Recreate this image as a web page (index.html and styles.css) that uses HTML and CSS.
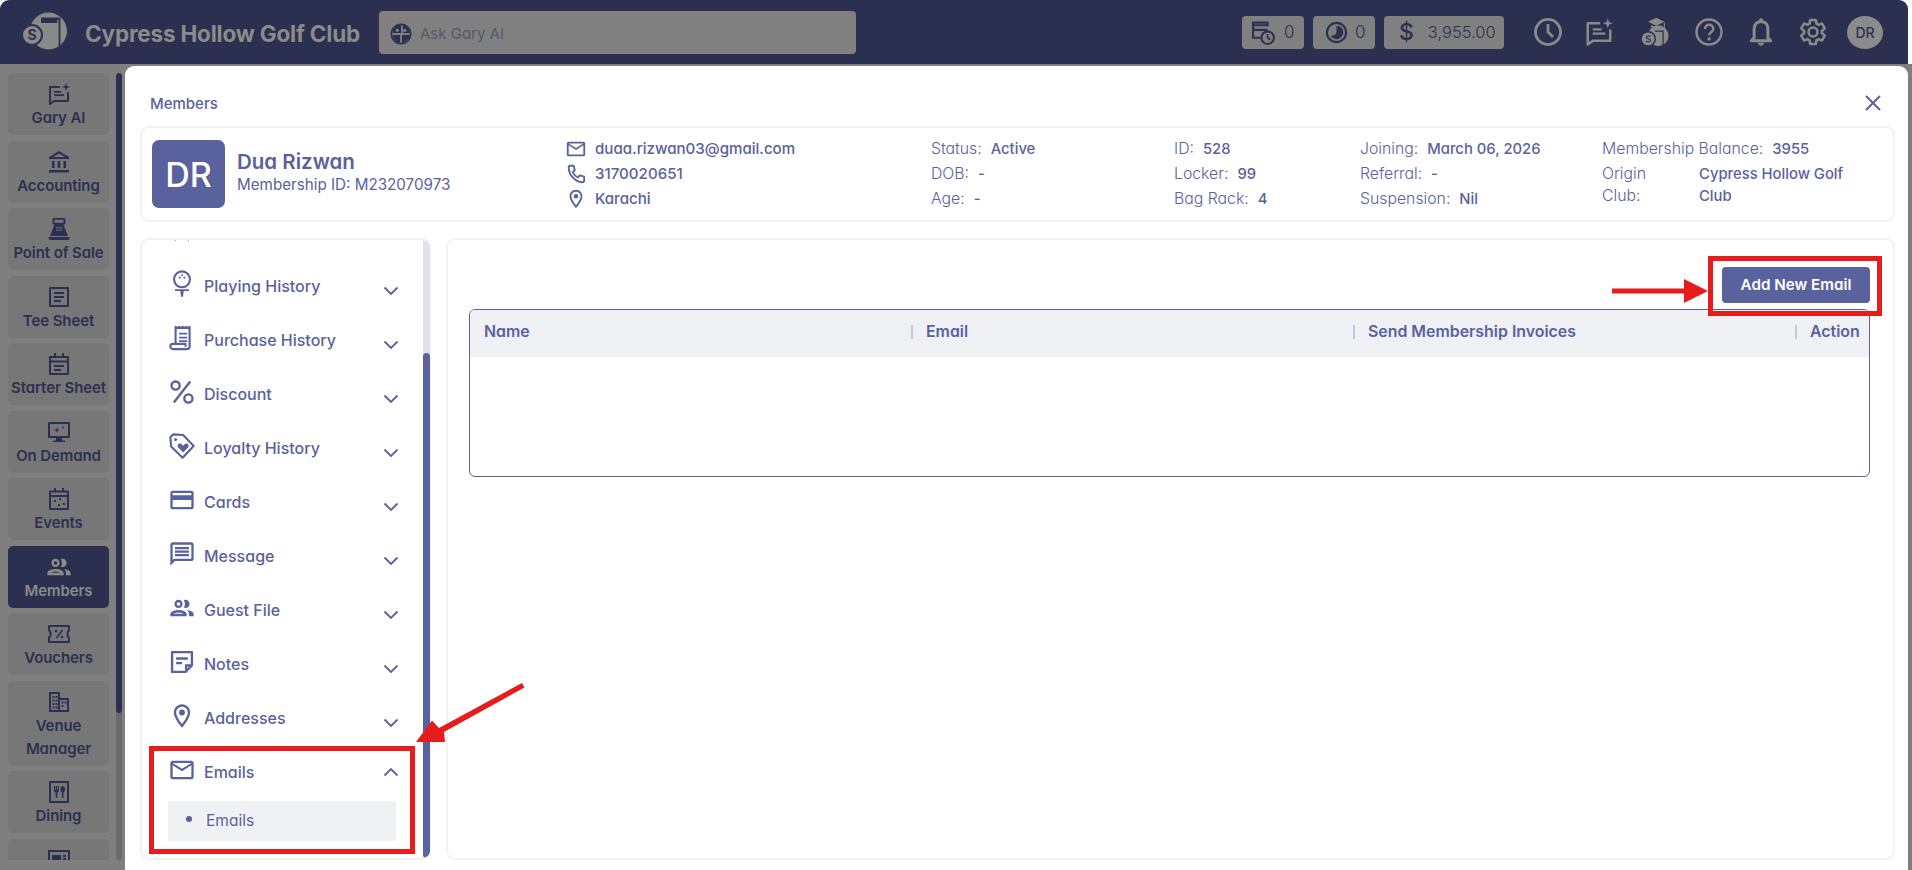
FILE: index.html
```html
<!DOCTYPE html>
<html lang="en">
<head>
<meta charset="utf-8">
<title>Members</title>
<link rel="stylesheet" href="styles.css">
</head>
<body>
<svg class="sprite" aria-hidden="true">
  <symbol id="i-mail" viewBox="0 0 24 24"><path d="M20 4H4c-1.1 0-2 .9-2 2v12c0 1.1.9 2 2 2h16c1.1 0 2-.9 2-2V6c0-1.1-.9-2-2-2zm0 14H4V8l8 5 8-5v10zm-8-7L4 6h16l-8 5z"/></symbol>
  <symbol id="i-pin" viewBox="0 0 24 24"><path d="M12 2C8.13 2 5 5.13 5 9c0 5.25 7 13 7 13s7-7.75 7-13c0-3.87-3.13-7-7-7zM7 9c0-2.76 2.24-5 5-5s5 2.24 5 5c0 2.88-2.88 7.19-5 9.88C9.92 16.21 7 11.85 7 9z"/><circle cx="12" cy="9" r="2.5"/></symbol>
  <symbol id="i-phone" viewBox="0 0 24 24"><path fill="none" stroke="currentColor" stroke-width="2" stroke-linejoin="round" d="M6 3h3.5l1.2 5-2.2 1.8c1 2.6 3 4.8 5.6 6l1.9-2.2 4.9 1.3V19c0 1-.8 2-2 2C11 20.500 4.500 13.500 4 5c0-1 .9-2 2-2z"/></symbol>
  <symbol id="i-card" viewBox="0 0 24 24"><path d="M20 4H4c-1.110 0-1.990.89-1.990 2L2 18c0 1.110.89 2 2 2h16c1.110 0 2-.89 2-2V6c0-1.110-.89-2-2-2zm0 14H4v-6h16v6zm0-10H4V6h16v2z"/></symbol>
  <symbol id="i-msg" viewBox="0 0 24 24"><path d="M20 2H4c-1.100 0-1.990.9-1.990 2L2 22l4-4h14c1.100 0 2-.9 2-2V4c0-1.100-.9-2-2-2zm0 14H5.170L4 17.170V4h16v12zM6 12h12v2H6zm0-3h12v2H6zm0-3h12v2H6z"/></symbol>
  <symbol id="i-people" viewBox="0 0 24 24"><path d="M9 13.750c-2.340 0-7 1.170-7 3.500V19h14v-1.750c0-2.330-4.660-3.500-7-3.500zM4.340 17c.84-.58 2.870-1.250 4.660-1.250s3.820.67 4.660 1.250H4.340zM9 12c1.930 0 3.500-1.570 3.500-3.500S10.930 5 9 5 5.500 6.570 5.500 8.500 7.070 12 9 12zm0-5c.83 0 1.500.67 1.500 1.500S9.830 10 9 10s-1.500-.67-1.500-1.500S8.170 7 9 7zm7.040 6.810c1.160.84 1.960 1.960 1.960 3.440V19h4v-1.750c0-2.020-3.500-3.170-5.960-3.440zM15 12c1.930 0 3.500-1.570 3.500-3.500S16.930 5 15 5c-.54 0-1.040.13-1.500.35.63.89 1 1.980 1 3.150s-.37 2.260-1 3.150c.46.22.96.35 1.500.35z"/></symbol>
  <symbol id="i-note" viewBox="0 0 24 24"><path fill="none" stroke="currentColor" stroke-width="2" stroke-linejoin="round" d="M3.500 3.500h17V15L15 20.500H3.500z"/><path d="M7 8h10v2H7zm0 4h5v2H7zm7.500 7v-5h6v2h-4v3z"/></symbol>
  <symbol id="i-percent" viewBox="0 0 24 24"><path fill="none" stroke="currentColor" stroke-width="2" d="M19 3 5 21"/><circle cx="6.500" cy="6.500" r="3.500" fill="none" stroke="currentColor" stroke-width="2"/><circle cx="17.500" cy="17.500" r="3.500" fill="none" stroke="currentColor" stroke-width="2"/></symbol>
  <symbol id="i-tag" viewBox="0 0 24 24"><path fill="none" stroke="currentColor" stroke-width="1.800" stroke-linejoin="round" d="M2 4.500 4.500 2l8.500.6 9 9.400-9.500 10L2.700 12.500z"/><circle cx="6.500" cy="6.500" r="1.300"/><path d="M13 17.500 8.800 13.300c-1.900-2.300 1.500-5 3.200-2.500l1 1 1-1c1.700-2.500 5.100.2 3.200 2.500z"/></symbol>
  <symbol id="i-golf" viewBox="0 0 24 24"><circle cx="12" cy="8" r="6.800" fill="none" stroke="currentColor" stroke-width="1.800"/><circle cx="10" cy="6.500" r=".9"/><circle cx="14" cy="6.500" r=".9"/><circle cx="12" cy="4.500" r=".9"/><path d="M6 16.500h12V18h-4.500l-.7 5h-1.600l-.7-5H6z"/></symbol>
  <symbol id="i-receipt" viewBox="0 0 24 24"><path fill="none" stroke="currentColor" stroke-width="1.800" stroke-linejoin="round" d="M6.500 17V2.500l1.500 1 1.500-1 1.500 1 1.500-1 1.500 1 1.500-1 1.500 1 1.500-1V19c0 1.500-1 2.500-2.500 2.500H4.500C3 21.500 2 20.500 2 19s1-2 2.500-2H15v2.500"/><path d="M9.500 7.500h7V9h-7zm0 3.500h7v1.500h-7zm0 3h7v1.500h-7z"/></symbol>
  <symbol id="i-bookmark" viewBox="0 0 24 24"><path fill="none" stroke="currentColor" stroke-width="2" d="M7 2v19l5-4 5 4V2z"/></symbol>
  <symbol id="i-chat" viewBox="0 0 24 24"><path fill="none" stroke="currentColor" stroke-width="2" stroke-linejoin="round" d="M13 5H3v17l4-3h14v-9"/><path d="M7 9h7v1.800H7zm0 3.300h10v1.800H7z"/><path d="M19 1l1 3 3 1-3 1-1 3-1-3-3-1 3-1z"/></symbol>
  <symbol id="i-bank" viewBox="0 0 24 24"><path d="M12 1 2 7v2h20V7zm0 2.500L18 7H6zM5 11h2.500v7H5zm5.700 0h2.600v7h-2.600zm5.800 0H19v7h-2.500zM2 20h20v2.500H2z"/></symbol>
  <symbol id="i-pos" viewBox="0 0 24 24"><path d="M7 1h10c1 0 1.500.6 1.500 1.500V6c0 1-.6 1.500-1.500 1.500h-.5L21 19H3L7.500 7.500H7C6 7.500 5.500 7 5.500 6V2.500C5.500 1.600 6 1 7 1zm.5 1.800v2.900h9V2.800zM1.500 20h21v1c0 1-1 2-2 2h-17c-1 0-2-1-2-2z"/><path fill="#777" d="M9 10h1.500v1.300H9zm2.300 0h1.500v1.300h-1.500zm2.300 0h1.500v1.300h-1.500zM9 12.500h1.500v1.300H9zm2.300 0h1.500v1.300h-1.500zm2.300 0h1.500v1.300h-1.500z"/></symbol>
  <symbol id="i-sheet" viewBox="0 0 24 24"><path fill="none" stroke="currentColor" stroke-width="2" stroke-linejoin="round" d="M3 3h18v18H3z"/><path d="M7 7h10v2H7zm0 4h10v2H7zm0 4h7v2H7z"/></symbol>
  <symbol id="i-starter" viewBox="0 0 24 24"><path fill="none" stroke="currentColor" stroke-width="2" stroke-linejoin="round" d="M3 5h18v17H3z"/><path d="M7 1h2v4H7zm8 0h2v4h-2zM3 8.500h18v2H3zM7 13h10v2H7zm0 4h7v2H7z"/></symbol>
  <symbol id="i-monitor" viewBox="0 0 24 24"><path fill="none" stroke="currentColor" stroke-width="2" stroke-linejoin="round" d="M2 3h20v14H2z"/><path d="M9 18h6v2.500h3V22H6v-1.500h3zM10 7l.7 2.300L13 10l-2.300.7L10 13l-.7-2.300L7 10l2.300-.7zm6-1 .4 1.100 1.100.4-1.100.4L16 9l-.4-1.100-1.100-.4 1.100-.4z"/></symbol>
  <symbol id="i-cal" viewBox="0 0 24 24"><path fill="none" stroke="currentColor" stroke-width="2" stroke-linejoin="round" d="M3 4.500h18V22H3z"/><path d="M7 1h2v4H7zm8 0h2v4h-2zM3 8h18v2H3zM7 13h2v2H7zm5 0h2v-2h-2zm4 3h2v2h-2zm-5 1h2v2h-2z"/></symbol>
  <symbol id="i-voucher" viewBox="0 0 24 24"><path fill="none" stroke="currentColor" stroke-width="2" stroke-linejoin="round" d="M2 4h20v4.500c-2 .5-2 6.500 0 7V20H2v-4.500c2-.5 2-6.500 0-7z"/><path fill="none" stroke="currentColor" stroke-width="1.500" d="m15.500 8-6 8"/><circle cx="9" cy="9" r="1.300"/><circle cx="15" cy="15" r="1.300"/></symbol>
  <symbol id="i-venue" viewBox="0 0 24 24"><path fill-rule="evenodd" d="M2 2h11v6h9v14H2zm2 2v16h7V4zm9 6v10h7V10z"/><path d="M5.500 6h2v2h-2zm3 0h2v2h-2zm-3 3.500h2v2h-2zm3 0h2v2h-2zm-3 3.500h2v2h-2zm3 0h2v2h-2zm-3 3.500h2v2h-2zm3 0h2v2h-2zm6-5h2v2h-2zm0 3.500h2v2h-2zm3-3.500h2v2h-2z"/></symbol>
  <symbol id="i-dining" viewBox="0 0 24 24"><path fill="none" stroke="currentColor" stroke-width="2" stroke-linejoin="round" d="M3 2h18v20H3z"/><path d="M7 6h1.200v3.500H9V6h1.200v3.500H11V6h1v5c0 1-1 1.500-1.700 1.700V18H8.700v-5.300C8 12.500 7 12 7 11zm8.800 0c1.600 0 2.200 1.500 2.200 3.200 0 1.500-.7 3-1.500 3.200V18h-1.600v-5.600c-.8-.3-1.400-1.700-1.400-3.200C13.500 7.500 14.200 6 15.800 6z"/></symbol>
  <symbol id="i-media" viewBox="0 0 24 24"><path fill="none" stroke="currentColor" stroke-width="2" d="M2 3h20v18H2z"/><path d="M5 7h9v5H5zm11 0h3v2h-3zm0 3h3v2h-3z"/></symbol>
  <symbol id="i-clock" viewBox="0 0 24 24"><circle cx="12" cy="12" r="10" fill="none" stroke="currentColor" stroke-width="2.200"/><path fill="none" stroke="currentColor" stroke-width="2.200" d="M12 5.500V12l4 4"/></symbol>
  <symbol id="i-help" viewBox="0 0 24 24"><circle cx="12" cy="12" r="10" fill="none" stroke="currentColor" stroke-width="2"/><path fill="none" stroke="currentColor" stroke-width="2" d="M8.800 9.500c0-4.300 6.600-4.300 6.600 0 0 2.600-3.300 2.700-3.300 5"/><circle cx="12.100" cy="17.500" r="1.300"/></symbol>
  <symbol id="i-bell" viewBox="0 0 24 24"><path fill="none" stroke="currentColor" stroke-width="2.400" stroke-linejoin="round" d="M12 3.500c3.500 0 5.500 2.500 5.500 6v7l2.200 2.500H4.300l2.200-2.500v-7c0-3.500 2-6 5.500-6z"/><circle cx="12" cy="2.500" r="1.600"/><path d="M9.500 20.500h5c0 3-5 3-5 0z"/></symbol>
  <symbol id="i-gear" viewBox="0 0 24 24"><path fill="none" stroke="currentColor" stroke-width="2" d="M19.140 12.940c.04-.3.06-.61.06-.94 0-.32-.02-.64-.07-.94l2.030-1.580c.18-.14.23-.41.12-.61l-1.920-3.320c-.12-.22-.37-.29-.59-.22l-2.390.96c-.5-.38-1.030-.7-1.620-.94l-.36-2.540c-.04-.24-.24-.41-.48-.41h-3.840c-.24 0-.43.17-.47.41l-.36 2.540c-.59.24-1.130.57-1.620.94l-2.390-.96c-.22-.08-.47 0-.59.22L2.740 8.870c-.12.21-.08.47.12.61l2.030 1.580c-.05.3-.09.63-.09.94s.02.64.07.94l-2.030 1.580c-.18.14-.23.41-.12.61l1.920 3.320c.12.22.37.29.59.22l2.390-.96c.5.38 1.030.7 1.620.94l.36 2.540c.05.24.24.41.48.41h3.840c.24 0 .44-.17.47-.41l.36-2.540c.59-.24 1.130-.56 1.620-.94l2.390.96c.22.08.47 0 .59-.22l1.920-3.320c.12-.22.07-.47-.12-.61l-2.010-1.580zM12 15.600c-1.980 0-3.600-1.620-3.600-3.600s1.620-3.600 3.600-3.600 3.600 1.620 3.600 3.600-1.620 3.600-3.600 3.600z"/></symbol>
  <symbol id="i-grad" viewBox="0 0 24 24"><path d="M13 .5l6.500 3.200L13 7 6.500 3.700zM8.800 6.300 13 8.300l4.200-2v1.500c-1 2-7.400 2-8.400 0zM19 4.500h.9V9H19z"/><circle cx="14.500" cy="15" r="8.300"/><circle cx="6.500" cy="17.500" r="5.700" stroke="#2c3050" stroke-width="1.200"/><path fill="none" stroke="#2c3050" stroke-width="1" d="M12 11.200h6.500V23"/><path fill="none" stroke="#2c3050" stroke-width="1" d="M8.400 15.600c-.8-.8-3.400-.8-3.400.8s3.400.6 3.400 2.200-2.800 1.500-3.600.7"/></symbol>
  <symbol id="i-queue" viewBox="0 0 24 24"><path fill="none" stroke="currentColor" stroke-width="2" d="M2 2.500h14V5H2zM2 5v12h7M2 9.500h14"/><circle cx="16" cy="17" r="6" fill="none" stroke="currentColor" stroke-width="2"/><path fill="none" stroke="currentColor" stroke-width="1.700" d="M16 13.500V17l2.500 2"/></symbol>
  <symbol id="i-half" viewBox="0 0 24 24"><circle cx="12" cy="12" r="10" fill="none" stroke="currentColor" stroke-width="2.200"/><path d="M12 5c5 0 7.500 3.500 7 7.500-.5 3.500-3.500 6.500-7 6.500-2.500 0-5-1.500-6-3.500 2-.2 6-1 6-4z"/></symbol>
  <symbol id="i-gary" viewBox="0 0 24 24"><circle cx="12" cy="12" r="10.500" fill="none" stroke="currentColor" stroke-width="2"/><path d="M12 2v9H3c0-5 4-9 9-9zm2 0c4 1 7 4 7.500 9H14zM3 13h8v8.500C7 21 3.500 17.500 3 13zm10 0h8.500c-.5 4-4 7.500-8.500 8.500z"/><circle cx="8" cy="8" r="1.800" fill="#808080"/><circle cx="16" cy="8" r="1.800" fill="#808080"/></symbol>
</svg>

<div class="app">
  <header class="topbar">
    <svg class="logo" viewBox="0 0 46 42" aria-hidden="true">
      <circle cx="26.500" cy="20" r="18.500" fill="#8a8a8a"/>
      <path d="M19 7.500h18.500V38" fill="none" stroke="#2c3050" stroke-width="1.800"/>
      <path d="M19 7.500h16.500V12H19z" fill="#2c3050"/>
      <circle cx="10" cy="24" r="11" fill="#2c3050"/>
      <circle cx="10" cy="24" r="9" fill="#8a8a8a"/>
      <text x="10" y="29" class="logo-mark">S</text>
    </svg>
    <span class="brand">Cypress Hollow Golf Club</span>
    <label class="search">
      <svg class="search-icon" aria-hidden="true"><use href="#i-gary"/></svg>
      <span>Ask Gary AI</span>
    </label>
    <div class="stats">
      <div class="pill pill-count"><svg class="pill-icon" aria-hidden="true"><use href="#i-queue"/></svg><span>0</span></div>
      <div class="pill pill-count pill-second"><svg class="pill-icon" aria-hidden="true"><use href="#i-half"/></svg><span>0</span></div>
      <div class="pill pill-money"><span class="dollar">$</span><span>3,955.00</span></div>
    </div>
    <div class="actions">
      <svg class="act" aria-hidden="true"><use href="#i-clock"/></svg>
      <svg class="act act-chat" aria-hidden="true"><use href="#i-chat"/></svg>
      <svg class="act act-grad" aria-hidden="true"><use href="#i-grad"/></svg>
      <svg class="act act-help" aria-hidden="true"><use href="#i-help"/></svg>
      <svg class="act act-bell" aria-hidden="true"><use href="#i-bell"/></svg>
      <svg class="act act-gear" aria-hidden="true"><use href="#i-gear"/></svg>
      <span class="user">DR</span>
    </div>
  </header>

  <div class="workspace">
    <aside class="rail">
      <nav class="rail-list">
        <a class="rail-item"><svg aria-hidden="true"><use href="#i-chat"/></svg><span>Gary AI</span></a>
        <a class="rail-item"><svg aria-hidden="true"><use href="#i-bank"/></svg><span>Accounting</span></a>
        <a class="rail-item"><svg aria-hidden="true"><use href="#i-pos"/></svg><span>Point of Sale</span></a>
        <a class="rail-item"><svg aria-hidden="true"><use href="#i-sheet"/></svg><span>Tee Sheet</span></a>
        <a class="rail-item"><svg aria-hidden="true"><use href="#i-starter"/></svg><span>Starter Sheet</span></a>
        <a class="rail-item"><svg aria-hidden="true"><use href="#i-monitor"/></svg><span>On Demand</span></a>
        <a class="rail-item"><svg aria-hidden="true"><use href="#i-cal"/></svg><span>Events</span></a>
        <a class="rail-item is-active rail-wide"><svg aria-hidden="true"><use href="#i-people"/></svg><span>Members</span></a>
        <a class="rail-item"><svg aria-hidden="true"><use href="#i-voucher"/></svg><span>Vouchers</span></a>
        <a class="rail-item rail-tall"><svg aria-hidden="true"><use href="#i-venue"/></svg><span>Venue Manager</span></a>
        <a class="rail-item"><svg aria-hidden="true"><use href="#i-dining"/></svg><span>Dining</span></a>
        <a class="rail-item"><svg aria-hidden="true"><use href="#i-media"/></svg></a>
      </nav>
      <div class="rail-scroll"><div class="rail-thumb"></div></div>
    </aside>

    <main class="modal">
      <div class="modal-head">
        <h1>Members</h1>
        <svg class="close" viewBox="0 0 16 16" aria-hidden="true"><path d="M1 1l14 14M15 1 1 15"/></svg>
      </div>

      <section class="profile">
        <div class="who">
          <div class="avatar">DR</div>
          <div>
            <div class="name">Dua Rizwan</div>
            <div class="memberid">Membership ID: <b>M232070973</b></div>
          </div>
        </div>
        <div class="col col-contact">
          <div class="line"><svg aria-hidden="true"><use href="#i-mail"/></svg><b>duaa.rizwan03@gmail.com</b></div>
          <div class="line"><svg aria-hidden="true"><use href="#i-phone"/></svg><b>3170020651</b></div>
          <div class="line"><svg aria-hidden="true"><use href="#i-pin"/></svg><b>Karachi</b></div>
        </div>
        <div class="col">
          <div class="line">Status: <b>Active</b></div>
          <div class="line">DOB: <b>-</b></div>
          <div class="line">Age: <b>-</b></div>
        </div>
        <div class="col">
          <div class="line">ID: <b>528</b></div>
          <div class="line">Locker: <b>99</b></div>
          <div class="line">Bag Rack: <b>4</b></div>
        </div>
        <div class="col">
          <div class="line">Joining: <b>March 06, 2026</b></div>
          <div class="line">Referral: <b>-</b></div>
          <div class="line">Suspension: <b>Nil</b></div>
        </div>
        <div class="col">
          <div class="line">Membership Balance: <b>3955</b></div>
          <div class="origin"><span>Origin Club:</span><b>Cypress Hollow Golf Club</b></div>
        </div>
      </section>

      <div class="panels">
        <section class="menu-panel">
          <div class="menu">
            <div class="row row-clipped"><svg class="row-icon" aria-hidden="true"><use href="#i-bookmark"/></svg><span class="row-label">Membership</span><svg class="chev" viewBox="0 0 16 10" aria-hidden="true"><path d="M1.500 1.500 8 8l6.500-6.500"/></svg></div>
            <div class="row"><svg class="row-icon" aria-hidden="true"><use href="#i-golf"/></svg><span class="row-label">Playing History</span><svg class="chev" viewBox="0 0 16 10" aria-hidden="true"><path d="M1.500 1.500 8 8l6.500-6.500"/></svg></div>
            <div class="row"><svg class="row-icon" aria-hidden="true"><use href="#i-receipt"/></svg><span class="row-label">Purchase History</span><svg class="chev" viewBox="0 0 16 10" aria-hidden="true"><path d="M1.500 1.500 8 8l6.500-6.500"/></svg></div>
            <div class="row"><svg class="row-icon" aria-hidden="true"><use href="#i-percent"/></svg><span class="row-label">Discount</span><svg class="chev" viewBox="0 0 16 10" aria-hidden="true"><path d="M1.500 1.500 8 8l6.500-6.500"/></svg></div>
            <div class="row"><svg class="row-icon" aria-hidden="true"><use href="#i-tag"/></svg><span class="row-label">Loyalty History</span><svg class="chev" viewBox="0 0 16 10" aria-hidden="true"><path d="M1.500 1.500 8 8l6.500-6.500"/></svg></div>
            <div class="row"><svg class="row-icon" aria-hidden="true"><use href="#i-card"/></svg><span class="row-label">Cards</span><svg class="chev" viewBox="0 0 16 10" aria-hidden="true"><path d="M1.500 1.500 8 8l6.500-6.500"/></svg></div>
            <div class="row"><svg class="row-icon" aria-hidden="true"><use href="#i-msg"/></svg><span class="row-label">Message</span><svg class="chev" viewBox="0 0 16 10" aria-hidden="true"><path d="M1.500 1.500 8 8l6.500-6.500"/></svg></div>
            <div class="row"><svg class="row-icon" aria-hidden="true"><use href="#i-people"/></svg><span class="row-label">Guest File</span><svg class="chev" viewBox="0 0 16 10" aria-hidden="true"><path d="M1.500 1.500 8 8l6.500-6.500"/></svg></div>
            <div class="row"><svg class="row-icon" aria-hidden="true"><use href="#i-note"/></svg><span class="row-label">Notes</span><svg class="chev" viewBox="0 0 16 10" aria-hidden="true"><path d="M1.500 1.500 8 8l6.500-6.500"/></svg></div>
            <div class="row"><svg class="row-icon" aria-hidden="true"><use href="#i-pin"/></svg><span class="row-label">Addresses</span><svg class="chev" viewBox="0 0 16 10" aria-hidden="true"><path d="M1.500 1.500 8 8l6.500-6.500"/></svg></div>
            <div class="row row-open"><svg class="row-icon" aria-hidden="true"><use href="#i-mail"/></svg><span class="row-label">Emails</span><svg class="chev" viewBox="0 0 16 10" aria-hidden="true"><path d="M1.500 8.500 8 2l6.500 6.500"/></svg></div>
            <div class="subrow"><i></i><span>Emails</span></div>
          </div>
          <div class="menu-scroll"><div class="menu-thumb"></div></div>
        </section>

        <section class="content">
          <div class="toolbar"><button class="add-btn" type="button">Add New Email</button></div>
          <div class="table">
            <div class="thead">
              <div class="th">Name</div>
              <div class="th">Email</div>
              <div class="th">Send Membership Invoices</div>
              <div class="th">Action</div>
            </div>
            <div class="tbody"></div>
          </div>
        </section>
      </div>
    </main>
  </div>

  <div class="mark mark-menu"></div>
  <div class="mark mark-btn"></div>
  <svg class="arrows" viewBox="0 0 1912 870" aria-hidden="true">
    <path d="M1612 288.500h72V279l24 12-24 12v-9.500h-72z"/>
    <path d="M522 683l2.500 4.500-80.500 44.500 1 10h-29l16-21.500 7 7.500z"/>
  </svg>
</div>
</body>
</html>
```
FILE: styles.css
```css
* { box-sizing: border-box; }
html, body { margin: 0; height: 100%; background: #fff; }
body {
  font-family: "Inter", "Liberation Sans", sans-serif;
  font-feature-settings: "cv11" 1;
  color: #59629c;
  overflow: hidden;
}
.sprite { display: none; }
svg { fill: currentColor; display: block; }

.app { position: relative; width: 1912px; height: 870px; display: flex; flex-direction: column; overflow: hidden; }

/* top bar */
.topbar {
  height: 64px; flex: none; display: flex; align-items: center;
  background: #2c3050; border-radius: 9px 9px 0 0; margin-right: 4px; padding-left: 22px;
}
.logo { width: 46px; height: 42px; flex: none; }
.logo-mark { fill: #2c3050; font-size: 14px; font-weight: 700; text-anchor: middle; }
.brand { margin-left: 17px; width: 294px; flex: none; padding-top: 3px; font-size: 22.500px; font-weight: 700; color: #8b8b8b; letter-spacing: -.2px; white-space: nowrap; }
.search {
  width: 477px; height: 43px; flex: none; display: flex; align-items: center; gap: 8px;
  background: #808080; border-radius: 4px; padding: 3px 0 0 11px; color: #55596d; font-size: 15px;
}
.search-icon { width: 22px; height: 22px; color: #2c3050; }
.stats { display: flex; gap: 9px; margin-left: 386px; }
.pill {
  height: 33px; display: flex; align-items: center; background: #808080; border-radius: 4px;
  color: #2c3050; font-size: 17px; font-weight: 300;
}
.pill-count { width: 62px; padding-left: 9px; gap: 8px; }
.pill-second { padding-left: 12px; gap: 7px; }
.pill-icon { width: 25px; height: 25px; }
.pill-second .pill-icon { width: 23px; height: 23px; }
.pill-money { width: 120px; padding-left: 15px; gap: 14px; font-size: 16.500px; }
.dollar { font-size: 23px; font-weight: 500; }
.actions { display: flex; align-items: center; margin-left: 29px; color: #8b8b8b; }
.act { width: 30px; height: 30px; }
.act-chat { margin-left: 21px; }
.act-grad { margin-left: 26px; }
.act-help { margin-left: 24px; }
.act-bell { margin-left: 22px; }
.act-gear { margin-left: 22px; }
.user {
  width: 36px; height: 33px; margin-left: 19px; border-radius: 50%; background: #8b8b8b; color: #2c3050;
  display: flex; align-items: center; justify-content: center; font-size: 14px; font-weight: 500;
}

/* left rail */
.workspace { flex: 1; min-height: 0; display: flex; background: #7f7f7f; padding-top: 2px; }
.rail { width: 125px; flex: none; padding: 7px 3px 0 8px; display: flex; gap: 7px; height: 802px; }
.rail-list { width: 101px; flex: none; height: 787px; overflow: hidden; display: flex; flex-direction: column; gap: 5.500px; }
.rail-item {
  height: 62px; flex: none; display: flex; flex-direction: column; align-items: center; padding-top: 9px;
  background: #777; border-radius: 5px; color: #2c3050; font-size: 15px; font-weight: 600; text-align: center; line-height: 23px; letter-spacing: -.1px;
}
.rail-item svg { width: 24px; height: 24px; flex: none; }
.rail-wide svg { width: 28px; height: 28px; margin: -2px 0; }
.rail-tall { height: 85px; padding-left: 6px; padding-right: 6px; }
.is-active { background: #2c3050; color: #8b8b8b; }
.rail-scroll { width: 6px; height: 787px; background: #6a6a6a; border-radius: 3px; overflow: hidden; }
.rail-thumb { height: 640px; background: #2c3050; border-radius: 3px; }

/* modal */
.modal { flex: 1; min-width: 0; margin-right: 4px; background: #fff; border-radius: 9px 9px 0 0; padding: 0 13px 10px 15px; display: flex; flex-direction: column; }
.modal-head { height: 60px; flex: none; display: flex; align-items: center; justify-content: space-between; padding: 14px 14px 0 10px; }
.modal-head h1 { margin: 0; font-size: 15px; font-weight: 500; }
.close { width: 16px; height: 16px; fill: none; stroke: #59629c; stroke-width: 2; }

.profile {
  height: 96px; flex: none; border: 2px solid #f2f2f2; border-radius: 9px;
  display: grid; grid-template-columns: 421px 358px 243px 186px 242px 1fr; align-items: center; padding-left: 10px;
  font-size: 15.800px; font-weight: 300;
}
.who { display: flex; align-items: center; gap: 12px; }
.avatar { width: 73px; height: 68px; border-radius: 7px; background: #59629c; color: #fff; font-size: 34px; font-weight: 500; display: flex; align-items: center; justify-content: center; }
.name { font-size: 20.500px; font-weight: 600; line-height: 26px; margin-top: -4px; }
.memberid { font-size: 15.200px; line-height: 20px; font-weight: 400; }
.memberid b { font-weight: 400; }
.col { align-self: start; margin-top: 8px; }
.col-contact { margin-left: -8px; }
.line { height: 25px; display: flex; align-items: center; gap: 9px; white-space: nowrap; }
.line b { font-weight: 500; font-size: 14.800px; }
.line svg { width: 22px; height: 22px; flex: none; }
.col-contact .line { gap: 8px; }
.col-contact b { font-size: 15.100px; }
.origin { display: grid; grid-template-columns: 97px 170px; line-height: 22px; margin-top: 2px; }
.origin span { display: block; width: 60px; }
.origin b { font-weight: 500; font-size: 14.800px; }

/* bottom panels */
.panels { flex: 1; min-height: 0; margin-top: 16px; display: flex; gap: 15px; }
.menu-panel { width: 291px; flex: none; border: 2px solid #f2f2f2; border-right-width: 1px; border-radius: 9px; display: flex; overflow: hidden; }
.menu { flex: 1; min-width: 0; overflow: hidden; padding-left: 28px; }
.row { height: 54px; display: flex; align-items: center; font-size: 16px; font-weight: 500; }
.row-clipped { margin: -37px 0 2px; }
.row-icon { width: 28px; height: 28px; flex: none; margin: -4px 0 0 -2px; }
.row-label { margin-left: 8px; flex: 1; }
.chev { width: 16px; height: 10px; flex: none; margin: 9px 24px 0 0; fill: none; stroke: #59629c; stroke-width: 1.800; }
.row-clipped .chev { margin-top: 11px; }
.row-open .chev { margin-top: -1px; }
.subrow { height: 40px; margin: 2px 27px 0 -2px; background: #f0f1f5; display: flex; align-items: center; font-size: 15.500px; padding: 0 0 2px 18px; gap: 14px; }
.subrow i { width: 6px; height: 6px; border-radius: 50%; background: #59629c; margin-top: -2px; flex: none; }
.menu-scroll { width: 7px; flex: none; background: #e2e0e8; border-radius: 0 0 4px 4px; }
.menu-thumb { height: 505px; margin-top: 113px; background: #59629c; border-radius: 4px; }

.content { flex: 1; min-width: 0; border: 2px solid #f2f2f2; border-radius: 9px; padding: 27px 23px 0 21px; }
.toolbar { display: flex; justify-content: flex-end; }
.add-btn { width: 148px; height: 36px; border: 0; border-radius: 4px; background: #59629c; color: #fff; font: inherit; font-feature-settings: "cv11" 1; font-size: 15.200px; font-weight: 600; padding-bottom: 2px; }
.table { margin-top: 6px; height: 168px; border: 1px solid #59629c; border-radius: 6px; overflow: hidden; }
.thead { height: 47px; background: #f0f1f5; display: grid; grid-template-columns: 441px 442px 442px 1fr; align-items: center; padding-bottom: 4px; }
.th { position: relative; padding-left: 15px; font-size: 15.900px; font-weight: 600; line-height: 20px; white-space: nowrap; }
.th:first-child { padding-left: 14px; }
.th + .th::before { content: ""; position: absolute; left: 0; top: 3px; bottom: 3px; width: 2px; background: #c3c8de; }

/* annotations */
.mark { position: absolute; border: 5px solid #e71c1c; }
.mark-menu { left: 149px; top: 746px; width: 266px; height: 108px; }
.mark-btn { left: 1708px; top: 256px; width: 174px; height: 60px; }
.arrows { position: absolute; inset: 0; width: 1912px; height: 870px; fill: #e71c1c; pointer-events: none; }
```
